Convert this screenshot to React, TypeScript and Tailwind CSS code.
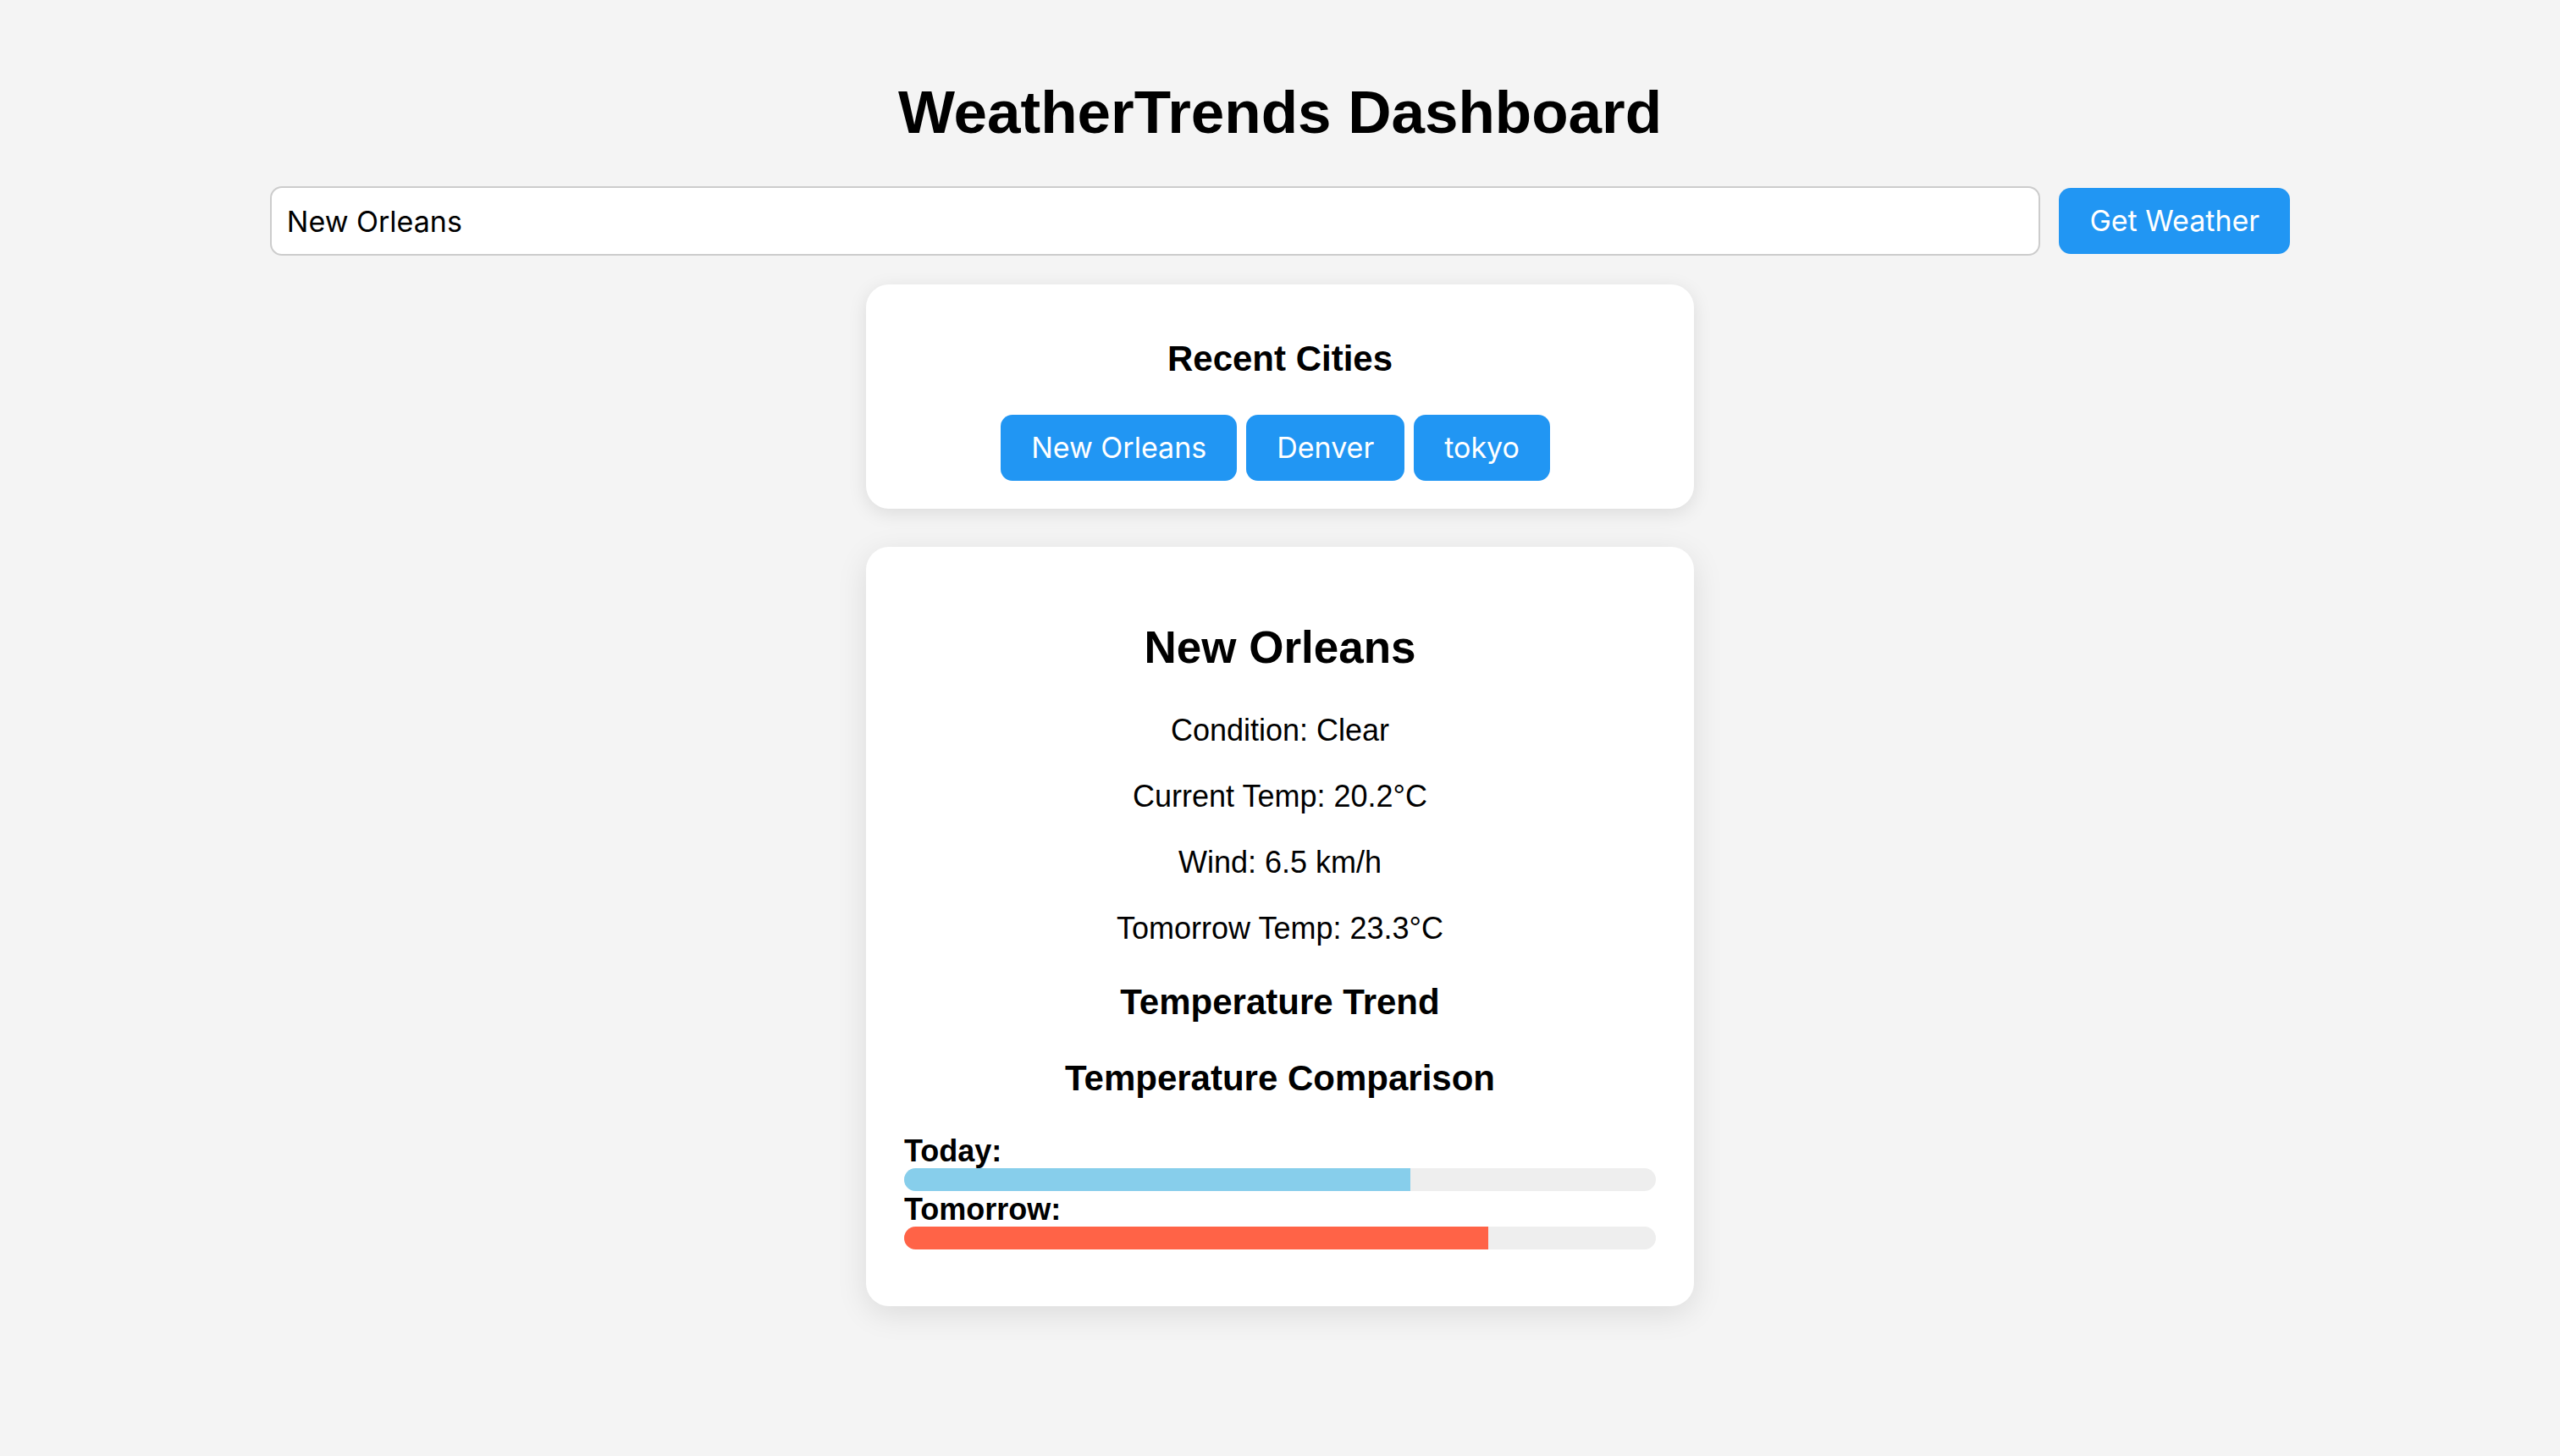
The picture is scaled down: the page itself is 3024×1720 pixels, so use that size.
import { useState } from "react";

const MAX_TEMP = 30;

const recentCities = ["New Orleans", "Denver", "tokyo"];

const details = [
  "Condition: Clear",
  "Current Temp: 20.2°C",
  "Wind: 6.5 km/h",
  "Tomorrow Temp: 23.3°C",
];

const buttonClass =
  "h-[78px] shrink-0 cursor-pointer rounded-[14px] bg-[#2196f3] px-9 font-['Inter',sans-serif] text-[34px] leading-[42px] text-white";

function TempBar({ label, temp, color }: { label: string; temp: number; color: string }) {
  return (
    <div>
      <strong className="block pt-0.5 text-left text-[36px] leading-[40px] font-bold">{label}</strong>
      <div className="h-[27px] overflow-hidden rounded-[14px] bg-[#eeeeee]">
        <div className={`h-full ${color}`} style={{ width: `${(temp / MAX_TEMP) * 100}%` }} />
      </div>
    </div>
  );
}

export default function App() {
  const [city, setCity] = useState("New Orleans");

  return (
    <main className="min-h-screen bg-[#f4f4f4] px-[18px] pt-[92px] pb-12 text-center font-['Liberation_Sans',Arial,sans-serif] text-black">
      <h1 className="text-[71px] leading-[82px] font-bold">WeatherTrends Dashboard</h1>

      <form
        className="mt-[46px] flex items-center justify-center gap-[22px]"
        onSubmit={(e) => e.preventDefault()}
      >
        <input
          type="text"
          aria-label="City"
          value={city}
          onChange={(e) => setCity(e.target.value)}
          className="h-[82px] w-[70%] rounded-[14px] border-2 border-[#cccccc] bg-white px-[18px] font-['Inter',sans-serif] text-[34px] leading-[42px] outline-none"
        />
        <button type="submit" className={buttonClass}>
          Get Weather
        </button>
      </form>

      <section className="mx-auto mt-[34px] max-w-[978px] rounded-[27px] bg-white px-[34px] pt-[64px] pb-[33px] shadow-[0_5px_22px_rgba(0,0,0,0.1)]">
        <h3 className="text-[42px] leading-[48px] font-bold">Recent Cities</h3>
        <div className="mt-[42px] flex justify-center">
          {recentCities.map((name) => (
            <button
              key={name}
              type="button"
              className={`${buttonClass} mr-[11px]`}
              onClick={() => setCity(name)}
            >
              {name}
            </button>
          ))}
        </div>
      </section>

      <section className="mx-auto mt-[45px] max-w-[978px] rounded-[27px] bg-white px-[45px] pt-[88px] pb-[67px] shadow-[0_9px_36px_rgba(0,0,0,0.1)]">
        <h2 className="text-[53px] leading-[62px] font-bold">New Orleans</h2>
        <div className="mt-[46px] flex flex-col gap-9 text-[36px] leading-[42px]">
          {details.map((line) => (
            <p key={line}>{line}</p>
          ))}
        </div>
        <h3 className="mt-[42px] text-[42px] leading-[48px] font-bold">Temperature Trend</h3>
        <h3 className="mt-[42px] mb-10 text-[42px] leading-[48px] font-bold">
          Temperature Comparison
        </h3>
        <TempBar label="Today:" temp={20.2} color="bg-[#87ceeb]" />
        <TempBar label="Tomorrow:" temp={23.3} color="bg-[#ff6347]" />
      </section>
    </main>
  );
}
